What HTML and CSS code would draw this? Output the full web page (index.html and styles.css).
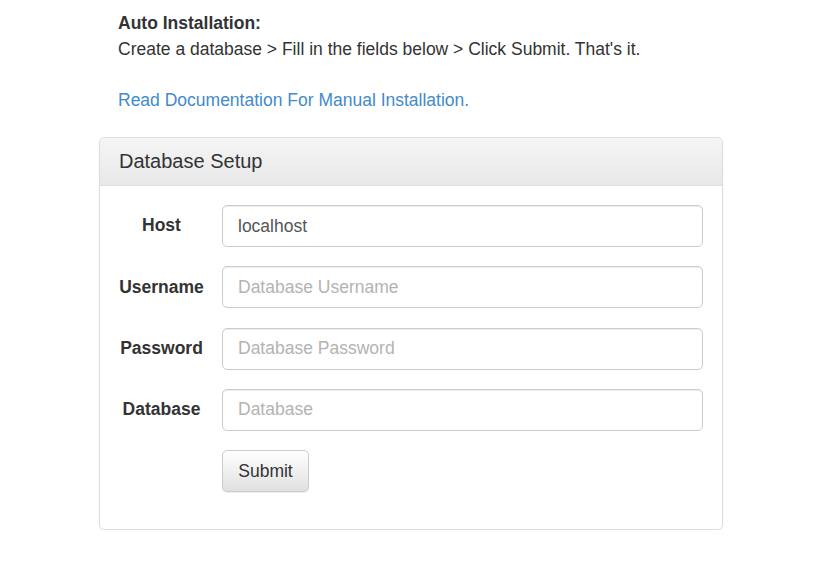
FILE: index.html
```html
<!DOCTYPE html>
<html>
<head>
<meta charset="utf-8">
<link rel="stylesheet" href="styles.css">
</head>
<body>
<div class="page">
  <div class="intro">
    <strong>Auto Installation:</strong><br>
    Create a database &gt; Fill in the fields below &gt; Click Submit. That's it.<br><br>
    <a class="doc-link" href="#">Read Documentation For Manual Installation.</a>
  </div>
  <div class="panel">
    <div class="panel-heading">Database Setup</div>
    <form class="panel-body">
      <div class="row">
        <label class="label">Host</label>
        <input class="field" type="text" value="localhost">
      </div>
      <div class="row">
        <label class="label">Username</label>
        <input class="field" type="text" placeholder="Database Username">
      </div>
      <div class="row">
        <label class="label">Password</label>
        <input class="field" type="password" placeholder="Database Password">
      </div>
      <div class="row">
        <label class="label">Database</label>
        <input class="field" type="text" placeholder="Database">
      </div>
      <div class="row">
        <span class="label"></span>
        <button class="btn" type="button">Submit</button>
      </div>
    </form>
  </div>
</div>
</body>
</html>
```

FILE: styles.css
```css
html, body {
  margin: 0;
  padding: 0;
  background: #fff;
}
body {
  font-family: "Liberation Sans", Arial, sans-serif;
  font-size: 17.5px;
  line-height: 25.5px;
  color: #333;
}
.page {
  width: 624px;
  margin-left: 99px;
  padding-top: 11px;
}
.intro {
  padding-left: 19px;
}
.intro strong {
  font-weight: bold;
}
.doc-link {
  color: #428bca;
  text-decoration: none;
}
.panel {
  margin-top: 24px;
  border: 1px solid #dddddd;
  border-radius: 5px;
  box-shadow: 0 1px 2px rgba(0,0,0,0.05);
  overflow: hidden;
}
.panel-heading {
  background: linear-gradient(to bottom, #f5f5f5 0%, #e8e8e8 100%);
  border-bottom: 1px solid #dddddd;
  padding: 12px 19px 12px;
  font-size: 20px;
  line-height: 23px;
  color: #333;
}
.panel-body {
  margin: 0;
  padding: 19px 19px 37px 19px;
  display: flex;
  flex-direction: column;
  gap: 19.25px;
}
.row {
  display: flex;
  align-items: center;
  gap: 18px;
}
.label {
  width: 85px;
  flex: none;
  text-align: center;
  font-weight: bold;
  font-size: 17.5px;
}
.field {
  flex: 1;
  box-sizing: border-box;
  height: 42px;
  margin: 0;
  padding: 0 15px;
  border: 1px solid #cccccc;
  border-radius: 5px;
  box-shadow: inset 0 1px 1px rgba(0,0,0,0.075);
  font-family: "Liberation Sans", Arial, sans-serif;
  font-size: 17.5px;
  color: #555;
  background: #fff;
  outline: none;
}
.field::placeholder {
  color: #b3b3b3;
}
.btn {
  box-sizing: border-box;
  height: 42px;
  width: 87px;
  padding: 0 15px;
  margin: 0;
  border: 1px solid #cccccc;
  border-radius: 5px;
  background: linear-gradient(to bottom, #ffffff 0%, #e0e0e0 100%);
  box-shadow: inset 0 1px 0 rgba(255,255,255,0.15), 0 1px 1px rgba(0,0,0,0.075);
  font-family: "Liberation Sans", Arial, sans-serif;
  font-size: 17.5px;
  color: #333;
}
```
